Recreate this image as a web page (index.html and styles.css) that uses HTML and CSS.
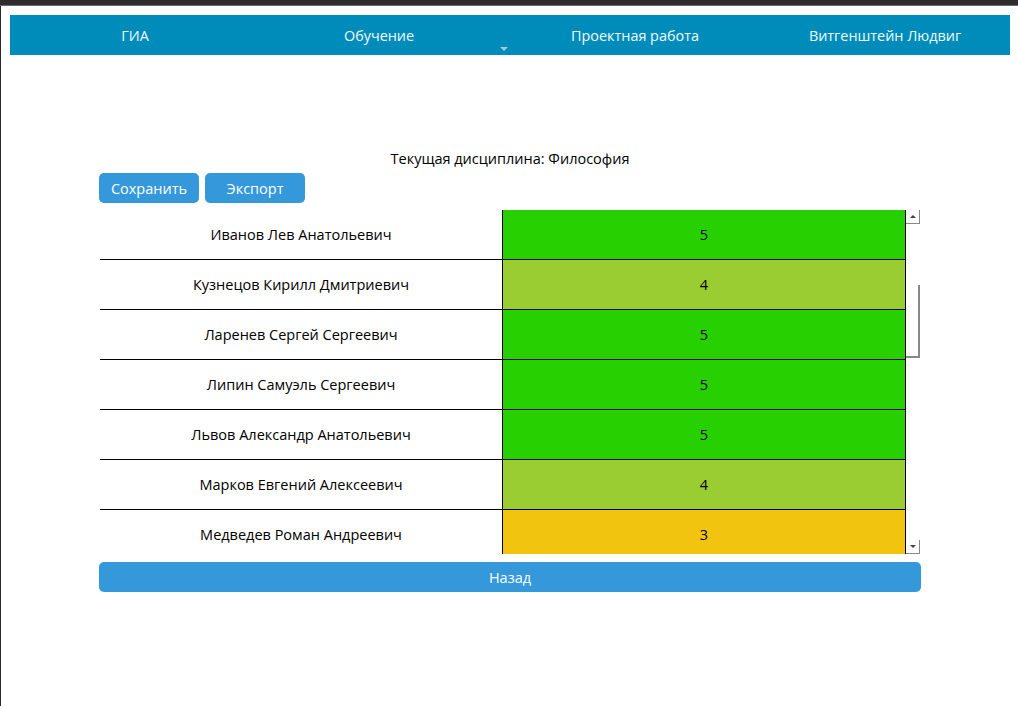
FILE: index.html
```html
<!DOCTYPE html>
<html lang="ru">
<head>
<meta charset="utf-8">
<title>Текущая дисциплина</title>
<link rel="stylesheet" href="styles.css">
</head>
<body>
<div class="chrome"></div>
<div class="page">
  <nav class="topbar">
    <a class="nav-item">ГИА</a>
    <a class="nav-item has-dropdown">Обучение<span class="caret"></span></a>
    <a class="nav-item">Проектная работа</a>
    <a class="nav-item">Витгенштейн Людвиг</a>
  </nav>

  <main class="content">
    <div class="title">Текущая дисциплина: Философия</div>
    <div class="actions">
      <button class="btn btn-save">Сохранить</button>
      <button class="btn btn-export">Экспорт</button>
    </div>

    <div class="grid-wrap">
      <div class="viewport">
        <div class="row"><div class="name">Иванов Лев Анатольевич</div><div class="grade g5">5</div></div>
        <div class="row"><div class="name">Кузнецов Кирилл Дмитриевич</div><div class="grade g4">4</div></div>
        <div class="row"><div class="name">Ларенев Сергей Сергеевич</div><div class="grade g5">5</div></div>
        <div class="row"><div class="name">Липин Самуэль Сергеевич</div><div class="grade g5">5</div></div>
        <div class="row"><div class="name">Львов Александр Анатольевич</div><div class="grade g5">5</div></div>
        <div class="row"><div class="name">Марков Евгений Алексеевич</div><div class="grade g4">4</div></div>
        <div class="row"><div class="name">Медведев Роман Андреевич</div><div class="grade g3">3</div></div>
      </div>
      <div class="scrollbar">
        <div class="sb-btn"><span class="tri up"></span></div>
        <div class="sb-track">
          <div class="sb-thumb"></div>
        </div>
        <div class="sb-btn"><span class="tri down"></span></div>
      </div>
    </div>

    <button class="btn btn-back">Назад</button>
  </main>
</div>
</body>
</html>
```

FILE: styles.css
```css
* { box-sizing: border-box; }

html, body {
  margin: 0;
  padding: 0;
  background: #fff;
}

body {
  font-family: "Open Sans", "Noto Sans", sans-serif;
  font-size: 14.5px;
  color: #000;
  height: 706px;
  overflow: hidden;
}

.chrome {
  height: 6px;
  background: #2e2c2d;
  border-bottom: 1px solid #6a6a6a;
}

.page {
  border-left: 1px solid #2b2b2b;
  height: 700px;
  padding-top: 9px;
}

.topbar {
  margin: 0 8px 0 9px;
  height: 40px;
  background: #008cba;
  display: grid;
  grid-template-columns: repeat(4, 1fr);
  align-items: center;
}

.nav-item {
  position: relative;
  display: flex;
  align-items: center;
  justify-content: center;
  height: 40px;
  padding-top: 1px;
  color: #f2fbff;
  font-size: 14.4px;
  text-decoration: none;
}

.has-dropdown {
  padding-right: 12px;
}

.caret {
  position: absolute;
  right: 2px;
  bottom: 4px;
  width: 0;
  height: 0;
  border-left: 4px solid transparent;
  border-right: 4px solid transparent;
  border-top: 4px solid rgba(255, 255, 255, 0.6);
}

.content {
  margin-left: 98px;
  width: 822px;
  padding-top: 94px;
}

.title {
  text-align: center;
  height: 20px;
  line-height: 20px;
  color: #000;
}

.actions {
  display: flex;
  gap: 6px;
  margin-top: 4px;
}

.btn {
  font-family: inherit;
  font-size: 14.5px;
  color: #fff;
  background: #3498db;
  border: none;
  border-radius: 5px;
  height: 30px;
  padding: 0;
  cursor: pointer;
}

.btn-save, .btn-export {
  width: 100px;
}

.grid-wrap {
  margin-top: 7px;
  margin-left: 1px;
  display: flex;
  height: 344px;
}

.viewport {
  width: 806px;
  height: 344px;
  overflow: hidden;
}

.row {
  display: flex;
  height: 50px;
}

.name {
  width: 402px;
  border-bottom: 1px solid #000;
  display: flex;
  align-items: center;
  justify-content: center;
  color: #000;
}

.grade {
  width: 404px;
  border-left: 1px solid #000;
  border-right: 1px solid #000;
  border-bottom: 1px solid #000;
  display: flex;
  align-items: center;
  justify-content: center;
  color: #000;
}

.g5 { background: #27d000; }
.g4 { background: #9acd32; }
.g3 { background: #f1c40f; }

.scrollbar {
  width: 14px;
  display: flex;
  flex-direction: column;
  background: #fff;
}

.sb-btn {
  height: 14px;
  display: flex;
  align-items: center;
  justify-content: center;
  border-right: 1px solid #888;
  border-bottom: 1px solid #888;
  background: #fff;
}

.tri {
  width: 0;
  height: 0;
  border-left: 3px solid transparent;
  border-right: 3px solid transparent;
}

.tri.up { border-bottom: 3px solid #444; }
.tri.down { border-top: 3px solid #444; }

.sb-track {
  flex: 1;
  padding-top: 61px;
}

.sb-thumb {
  height: 73px;
  border-right: 2px solid #888;
  border-bottom: 2px solid #888;
  background: #fff;
}

.btn-back {
  display: block;
  width: 822px;
  margin-top: 8px;
}
```
